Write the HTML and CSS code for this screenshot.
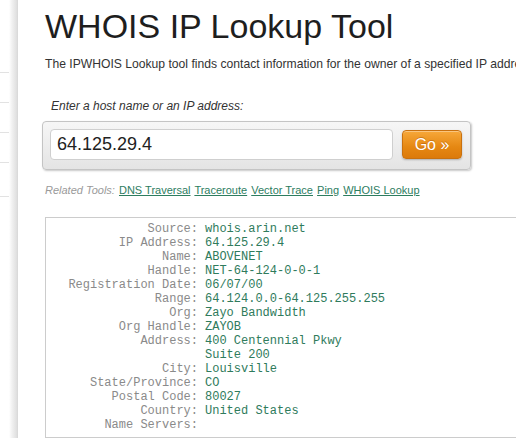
FILE: index.html
```html
<!DOCTYPE html>
<html lang="en">
<head>
<meta charset="utf-8">
<title>WHOIS IP Lookup Tool</title>
<link rel="stylesheet" href="styles.css">
</head>
<body>
<div class="page">
  <aside class="sidebar">
    <div class="side-item"></div>
    <div class="side-item"></div>
    <div class="side-item"></div>
    <div class="side-item"></div>
    <div class="side-item tall"></div>
  </aside>
  <main class="main">
    <h1 class="title">WHOIS IP Lookup Tool</h1>
    <p class="intro">The IPWHOIS Lookup tool finds contact information for the owner of a specified IP address.</p>
    <form class="lookup">
      <label class="lookup-label" for="host">Enter a host name or an IP address:</label>
      <div class="lookup-panel">
        <input class="lookup-input" id="host" type="text" value="64.125.29.4">
        <button class="go-btn" type="button">Go »</button>
      </div>
    </form>
    <p class="related"><span class="related-label">Related Tools:</span> <a href="#">DNS Traversal</a> <a href="#">Traceroute</a> <a href="#">Vector Trace</a> <a href="#">Ping</a> <a href="#">WHOIS Lookup</a></p>
    <div class="result">
      <span class="k">Source:</span><span class="v">whois.arin.net</span>
      <span class="k">IP Address:</span><span class="v">64.125.29.4</span>
      <span class="k">Name:</span><span class="v">ABOVENET</span>
      <span class="k">Handle:</span><span class="v">NET-64-124-0-0-1</span>
      <span class="k">Registration Date:</span><span class="v">06/07/00</span>
      <span class="k">Range:</span><span class="v">64.124.0.0-64.125.255.255</span>
      <span class="k">Org:</span><span class="v">Zayo Bandwidth</span>
      <span class="k">Org Handle:</span><span class="v">ZAYOB</span>
      <span class="k">Address:</span><span class="v">400 Centennial Pkwy</span>
      <span class="k"></span><span class="v">Suite 200</span>
      <span class="k">City:</span><span class="v">Louisville</span>
      <span class="k">State/Province:</span><span class="v">CO</span>
      <span class="k">Postal Code:</span><span class="v">80027</span>
      <span class="k">Country:</span><span class="v">United States</span>
      <span class="k">Name Servers:</span><span class="v"></span>
    </div>
  </main>
</div>
</body>
</html>
```

FILE: styles.css
```css
html, body {
  margin: 0;
  padding: 0;
  background: #ffffff;
}

.page {
  display: flex;
  width: 516px;
  height: 438px;
  overflow: hidden;
}

.sidebar {
  flex: none;
  width: 18px;
  padding-top: 43px;
  box-sizing: border-box;
  display: flex;
  flex-direction: column;
  background: linear-gradient(to right, #ffffff 0, #ffffff 9px, #f1f1f1 12px, #dedede 17px, #d6d6d6 18px);
}

.side-item {
  height: 29px;
  width: 9px;
  border-bottom: 1px solid #e2e2e2;
}

.side-item.tall {
  height: 33px;
}

.main {
  flex: none;
  width: 620px;
  padding: 6px 0 0 27px;
  box-sizing: border-box;
  font-family: "Liberation Sans", Arial, sans-serif;
  color: #333333;
}

.title {
  margin: 0;
  font-size: 34px;
  line-height: 40px;
  font-weight: normal;
  color: #1e1e1e;
}

.intro {
  margin: 10px 0 0;
  font-size: 12.15px;
  line-height: 16px;
  white-space: nowrap;
  color: #333333;
}

.lookup {
  margin: 26px 0 0;
  display: flex;
  flex-direction: column;
}

.lookup-label {
  margin-left: 6px;
  font-size: 12px;
  line-height: 16px;
  font-style: italic;
  color: #333333;
}

.lookup-panel {
  margin: 7px 0 0 -3px;
  width: 429px;
  box-sizing: border-box;
  display: flex;
  align-items: center;
  padding: 7px 0 9px 7px;
  border: 1px solid #c4c4c4;
  border-radius: 4px;
  background: linear-gradient(#f6f6f6, #e4e4e4);
  box-shadow: 1px 1px 2px rgba(0, 0, 0, 0.22);
}

.lookup-input {
  width: 343px;
  height: 31px;
  box-sizing: border-box;
  margin: 0;
  padding: 0 6px;
  border: 1px solid #cfcfcf;
  border-radius: 4px;
  background: #ffffff;
  font-family: "Liberation Sans", Arial, sans-serif;
  font-size: 18px;
  color: #222222;
  outline: none;
}

.go-btn {
  margin-left: 9px;
  width: 60px;
  height: 29px;
  box-sizing: border-box;
  padding: 0;
  border: 1px solid #c9710f;
  border-radius: 4px;
  background: linear-gradient(#f7a83a, #e58712 60%, #dc7a0a);
  box-shadow: 0 1px 2px rgba(0, 0, 0, 0.25), inset 0 1px 0 rgba(255, 255, 255, 0.35);
  font-family: "Liberation Sans", Arial, sans-serif;
  font-size: 16px;
  color: #ffffff;
  text-shadow: 0 -1px 0 rgba(150, 70, 0, 0.4);
  cursor: pointer;
}

.related {
  margin: 13px 0 0;
  font-size: 11px;
  line-height: 14px;
  white-space: nowrap;
}

.related-label {
  font-style: italic;
  color: #9a9a9a;
  margin-right: 1px;
}

.related a {
  color: #2d7d5f;
  text-decoration: underline;
  margin-right: 1px;
}

.result {
  margin-top: 20px;
  width: 560px;
  box-sizing: border-box;
  padding: 4px 0 5px 22px;
  border: 1px solid #cccccc;
  display: grid;
  grid-template-columns: 130px auto;
  column-gap: 7px;
  font-family: "Liberation Mono", "Courier New", monospace;
  font-size: 12px;
  line-height: 14px;
  white-space: pre;
}

.result .k {
  text-align: right;
  color: #8a8a8a;
  height: 14px;
}

.result .v {
  color: #2f7b5c;
  height: 14px;
}
```
